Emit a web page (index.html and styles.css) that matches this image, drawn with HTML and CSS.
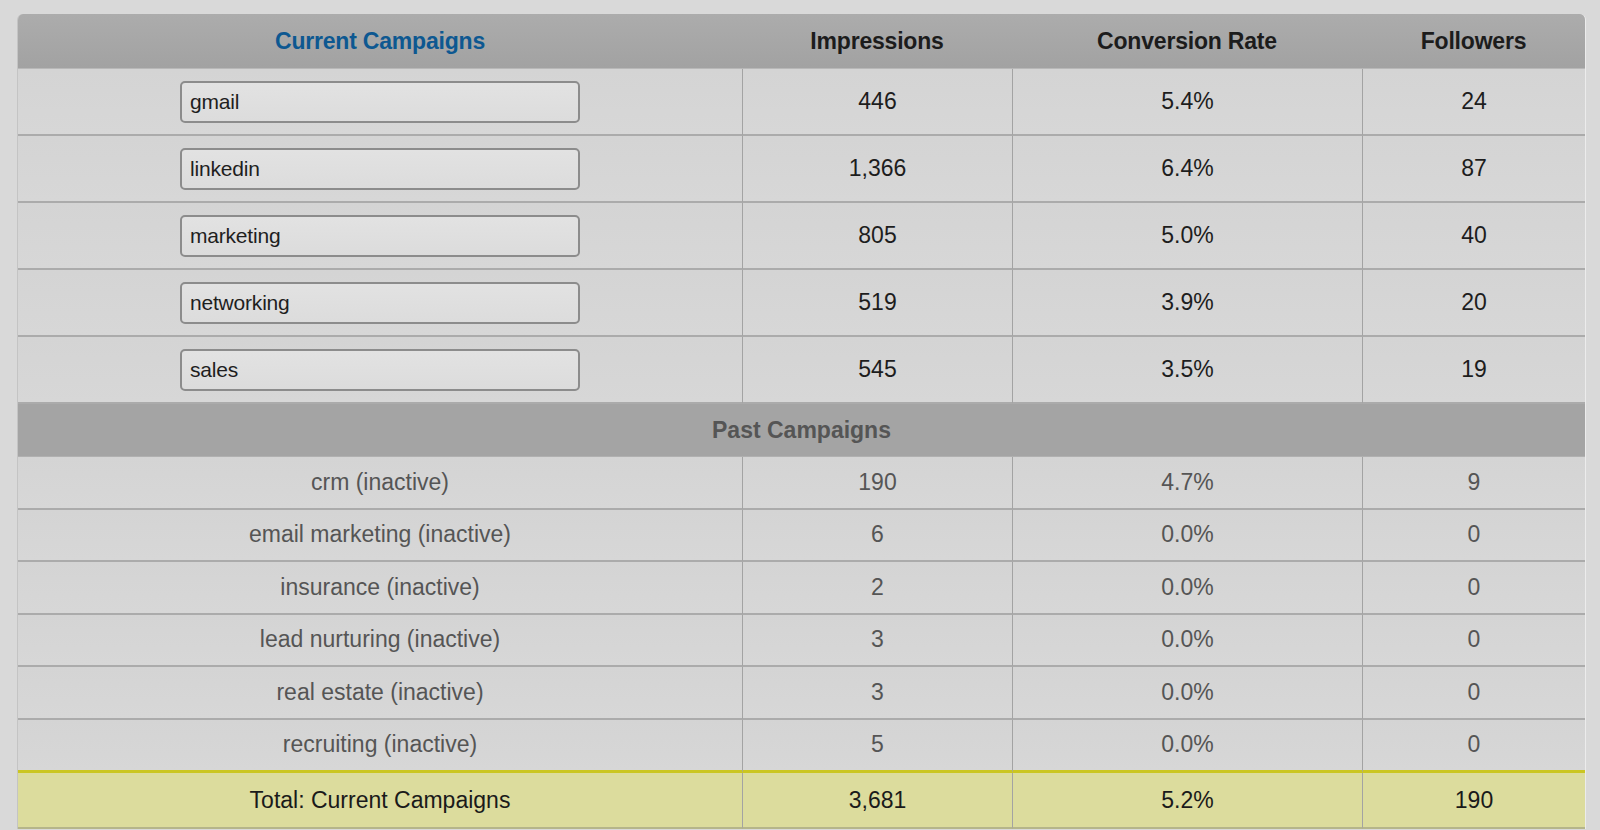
FILE: index.html
```html
<!DOCTYPE html>
<html>
<head>
<meta charset="utf-8">
<link rel="stylesheet" href="styles.css">
</head>
<body>
<div class="wrap">
<table class="stats">
  <colgroup>
    <col class="c1"><col class="c2"><col class="c3"><col class="c4">
  </colgroup>
  <thead>
    <tr class="head">
      <th class="title">Current Campaigns</th>
      <th>Impressions</th>
      <th>Conversion Rate</th>
      <th>Followers</th>
    </tr>
  </thead>
  <tbody>
    <tr class="cur"><td><div class="box">gmail</div></td><td>446</td><td>5.4%</td><td>24</td></tr>
    <tr class="cur"><td><div class="box">linkedin</div></td><td>1,366</td><td>6.4%</td><td>87</td></tr>
    <tr class="cur"><td><div class="box">marketing</div></td><td>805</td><td>5.0%</td><td>40</td></tr>
    <tr class="cur"><td><div class="box">networking</div></td><td>519</td><td>3.9%</td><td>20</td></tr>
    <tr class="cur"><td><div class="box">sales</div></td><td>545</td><td>3.5%</td><td>19</td></tr>
    <tr class="past-head"><th colspan="4">Past Campaigns</th></tr>
    <tr class="past"><td>crm (inactive)</td><td>190</td><td>4.7%</td><td>9</td></tr>
    <tr class="past"><td>email marketing (inactive)</td><td>6</td><td>0.0%</td><td>0</td></tr>
    <tr class="past"><td>insurance (inactive)</td><td>2</td><td>0.0%</td><td>0</td></tr>
    <tr class="past"><td>lead nurturing (inactive)</td><td>3</td><td>0.0%</td><td>0</td></tr>
    <tr class="past"><td>real estate (inactive)</td><td>3</td><td>0.0%</td><td>0</td></tr>
    <tr class="past"><td>recruiting (inactive)</td><td>5</td><td>0.0%</td><td>0</td></tr>
    <tr class="total"><td>Total: Current Campaigns</td><td>3,681</td><td>5.2%</td><td>190</td></tr>
  </tbody>
</table>
</div>
</body>
</html>
```

FILE: styles.css
```css
html, body {
  margin: 0;
  padding: 0;
  background: #d9d9d9;
  font-family: "Liberation Sans", Arial, sans-serif;
  overflow: hidden;
  height: 830px;
}
.wrap {
  padding: 14px 0 0 17px;
}
.stats {
  width: 1567px;
  border-collapse: separate;
  border-spacing: 0;
  table-layout: fixed;
  border-radius: 6px 6px 0 0;
  overflow: hidden;
  border-right: 1px solid #ececec;
  border-left: 1px solid #c4c4c4;
}
.c1 { width: 724px; }
.c2 { width: 270px; }
.c3 { width: 350px; }
.c4 { width: 223px; }

.head th {
  height: 54px;
  padding: 0;
  background: linear-gradient(#acacac, #a2a2a2);
  font-size: 23px;
  font-weight: bold;
  color: #1c1c1c;
  letter-spacing: -0.2px;
  text-align: center;
  vertical-align: middle;
  border-bottom: 1px solid #b8b8b8;
}
.head th.title {
  color: #0d5891;
  letter-spacing: -0.2px;
}

td {
  padding: 0;
  text-align: center;
  vertical-align: middle;
  font-size: 23px;
  background: linear-gradient(#d4d4d4, #d7d7d7);
  border-bottom: 2px solid #ababab;
  border-left: 1px solid #a3a3a3;
}
td:first-child {
  border-left: none;
}
.cur td {
  height: 65px;
  color: #1d1d1d;
}
.box {
  width: 388px;
  height: 38px;
  margin: 0 auto 0 162px;
  border: 2px solid #8c8c8c;
  border-radius: 5px;
  background: linear-gradient(#e2e2e2, #dcdcdc);
  text-align: left;
  padding-left: 8px;
  font-size: 21px;
  line-height: 38px;
  color: #1e1e1e;
  letter-spacing: -0.2px;
}
.past-head th {
  height: 52px;
  padding: 0;
  background: #a4a4a4;
  font-size: 23px;
  font-weight: bold;
  color: #555555;
  text-align: center;
  border-bottom: 1px solid #b0b0b0;
}
.past td {
  height: 50.5px;
  color: #555555;
}
.past:nth-last-child(2) td {
  border-bottom: 3px solid #cbc621;
}
.total td {
  height: 54px;
  background: #dcdc9d;
  color: #1a1a1a;
  border-bottom: 2px solid #b5b58a;
}
```
